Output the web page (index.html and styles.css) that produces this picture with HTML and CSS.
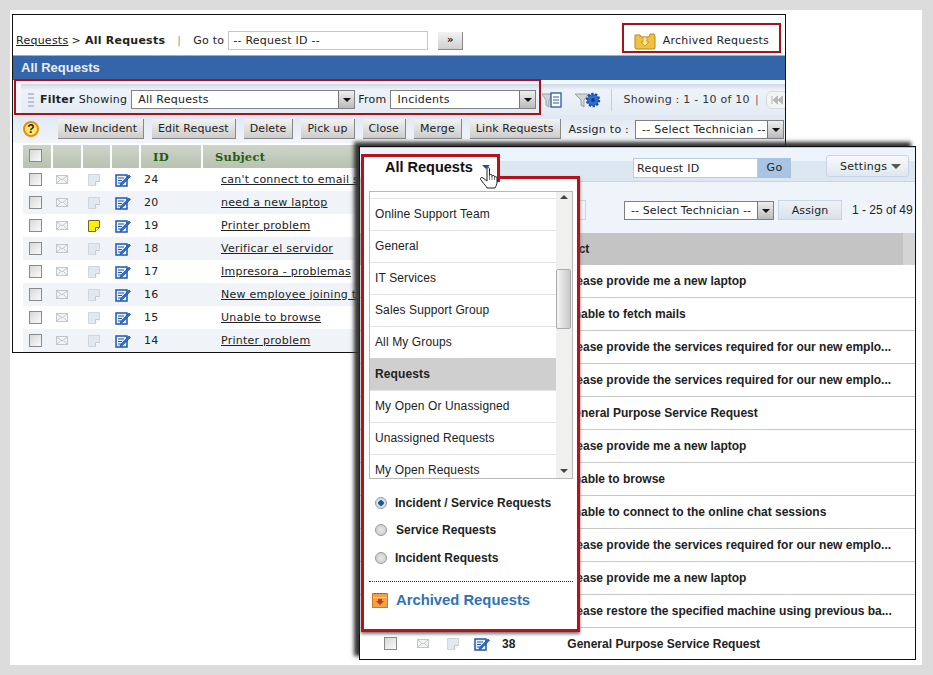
FILE: index.html
```html
<!DOCTYPE html>
<html lang="en">
<head>
<meta charset="utf-8">
<title>All Requests</title>
<link rel="stylesheet" href="styles.css">
</head>
<body>
<svg class="defs" width="0" height="0" aria-hidden="true">
  <defs>
    <symbol id="mail" viewBox="0 0 12 10"><rect x=".5" y=".5" width="11" height="8" fill="#f2f4f5" stroke="#c2c7cc"/><path d="M1 1l5 4 5-4M1 8l3.500-3.500M11 8L7.500 4.500" fill="none" stroke="#c2c7cc"/></symbol>
    <symbol id="note" viewBox="0 0 12 12"><path d="M.5.500h11v7l-4 4h-7z" fill="#e2e8f0" stroke="#cfd6de"/><path d="M7.500 11.500v-4h4" fill="#fff" stroke="#c2c9d2"/></symbol>
    <symbol id="noteY" viewBox="0 0 12 12"><path d="M.5.500h11v7l-4 4h-7z" fill="#f7ee12" stroke="#6e6a10"/><path d="M7.500 11.500v-4h4" fill="#fff" stroke="#6e6a10"/></symbol>
    <symbol id="edit" viewBox="0 0 16 14"><rect x="1" y="2" width="11" height="11" fill="#e8f1fb" stroke="#1f57b0" stroke-width="1.500"/><path d="M3 5h6M3 7.500h4M3 10h3" stroke="#1f57b0"/><path d="M6 10l8-8 1.500 1.500-8 8-2.500 1z" fill="#2a70cf" stroke="#123f8c" stroke-width=".6"/></symbol>
  </defs>
</svg>

<main class="canvas">
  <section class="win-back">
    <div class="crumbs">
      <a class="link" href="#">Requests</a><span class="sep">&gt;</span><b>All Requests</b><span class="pipe">|</span><span>Go to</span>
      <span class="field goto">-- Request ID --</span>
      <span class="go-btn">&#187;</span>
      <span class="archived"><svg width="22" height="18" viewBox="0 0 22 18"><path d="M1 3h5l1 2h8l1-3h4l1 2v12l-1 1H2l-1-1z" fill="#f3c23c" stroke="#b8862a"/><path d="M9 5h4v5h2l-4 4-4-4h2z" fill="#fbe98e" stroke="#c08a20" stroke-width=".7"/></svg>Archived Requests</span>
    </div>
    <h1 class="title">All Requests</h1>
    <div class="filter">
      <span class="grip"></span><b>Filter</b><span>Showing</span>
      <span class="field sel sel-show">All Requests<i class="arrow"></i></span>
      <span>From</span>
      <span class="field sel sel-from">Incidents<i class="arrow"></i></span>
      <svg class="fic" width="22" height="18" viewBox="0 0 22 18"><path d="M1 3h11l-4 6v7l-3-2V9z" fill="#cfd4d8" stroke="#9aa2aa"/><rect x="10" y="2" width="10" height="14" fill="#fff" stroke="#2457a8" stroke-width="1.300"/><path d="M12 6h6M12 9h6M12 12h6" stroke="#2457a8"/></svg>
      <svg class="fic" width="28" height="18" viewBox="0 0 28 18"><path d="M1 3h14l-5 6v7l-3-2V9z" fill="#cfd4d8" stroke="#9aa2aa"/><circle cx="19" cy="9" r="6" fill="#2f6fd0" stroke="#1c4c9c" stroke-width="2.500" stroke-dasharray="2.200 1.500"/><circle cx="19" cy="9" r="2" fill="#123f8c"/></svg>
      <span class="vsep"></span>
      <span class="showing">Showing : 1 - 10 of 10</span><span class="tick">|</span>
      <span class="pager"><svg width="12" height="10" viewBox="0 0 12 10"><path d="M1 1v8M6.500 1v8L2 5zM11.500 1v8L7 5z" fill="#b4b8bc" stroke="#b4b8bc"/></svg></span>
    </div>
    <div class="toolbar">
      <span class="help">?</span>
      <span class="btn">New Incident</span><span class="btn">Edit Request</span><span class="btn">Delete</span><span class="btn">Pick up</span><span class="btn">Close</span><span class="btn">Merge</span><span class="btn">Link Requests</span>
      <span class="assign">Assign to :</span>
      <span class="field sel sel-tech">-- Select Technician --<i class="arrow"></i></span>
    </div>
    <table class="grid">
      <thead>
        <tr><th class="c1"><span class="cb"></span></th><th class="c2"></th><th class="c3"></th><th class="c4"></th><th class="c5">ID</th><th>Subject</th></tr>
      </thead>
      <tbody>
        <tr><td><span class="cb"></span></td><td><svg class="im"><use href="#mail"/></svg></td><td><svg class="in"><use href="#note"/></svg></td><td><svg class="ie"><use href="#edit"/></svg></td><td class="num">24</td><td class="sub"><a href="#">can't connect to email s</a></td></tr>
        <tr class="alt"><td><span class="cb"></span></td><td><svg class="im"><use href="#mail"/></svg></td><td><svg class="in"><use href="#note"/></svg></td><td><svg class="ie"><use href="#edit"/></svg></td><td class="num">20</td><td class="sub"><a href="#">need a new laptop</a></td></tr>
        <tr><td><span class="cb"></span></td><td><svg class="im"><use href="#mail"/></svg></td><td><svg class="in"><use href="#noteY"/></svg></td><td><svg class="ie"><use href="#edit"/></svg></td><td class="num">19</td><td class="sub"><a href="#">Printer problem</a></td></tr>
        <tr class="alt"><td><span class="cb"></span></td><td><svg class="im"><use href="#mail"/></svg></td><td><svg class="in"><use href="#note"/></svg></td><td><svg class="ie"><use href="#edit"/></svg></td><td class="num">18</td><td class="sub"><a href="#">Verificar el servidor</a></td></tr>
        <tr><td><span class="cb"></span></td><td><svg class="im"><use href="#mail"/></svg></td><td><svg class="in"><use href="#note"/></svg></td><td><svg class="ie"><use href="#edit"/></svg></td><td class="num">17</td><td class="sub"><a href="#">Impresora - problemas</a></td></tr>
        <tr class="alt"><td><span class="cb"></span></td><td><svg class="im"><use href="#mail"/></svg></td><td><svg class="in"><use href="#note"/></svg></td><td><svg class="ie"><use href="#edit"/></svg></td><td class="num">16</td><td class="sub"><a href="#">New employee joining t</a></td></tr>
        <tr><td><span class="cb"></span></td><td><svg class="im"><use href="#mail"/></svg></td><td><svg class="in"><use href="#note"/></svg></td><td><svg class="ie"><use href="#edit"/></svg></td><td class="num">15</td><td class="sub"><a href="#">Unable to browse</a></td></tr>
        <tr class="alt"><td><span class="cb"></span></td><td><svg class="im"><use href="#mail"/></svg></td><td><svg class="in"><use href="#note"/></svg></td><td><svg class="ie"><use href="#edit"/></svg></td><td class="num">14</td><td class="sub"><a href="#">Printer problem</a></td></tr>
      </tbody>
    </table>
    <div class="hl hl-filter"></div>
    <div class="hl hl-arch"></div>
  </section>

  <section class="win-front">
    <div class="f-head">
      <span class="f-search"><span class="f-input">Request ID</span><span class="f-go">Go</span></span>
      <span class="f-settings">Settings<i class="arrow-s"></i></span>
    </div>
    <div class="f-tools">
      <span class="f-stub"></span>
      <span class="field sel f-tech">-- Select Technician --<i class="arrow"></i></span>
      <span class="f-assign">Assign</span>
      <span class="f-count">1 - 25 of 49</span>
    </div>
    <div class="f-colhead"><span>Subject</span></div>
    <ul class="f-rows">
      <li>Please provide me a new laptop</li>
      <li>Unable to fetch mails</li>
      <li>Please provide the services required for our new emplo...</li>
      <li>Please provide the services required for our new emplo...</li>
      <li>General Purpose Service Request</li>
      <li>Please provide me a new laptop</li>
      <li>Unable to browse</li>
      <li>Unable to connect to the online chat sessions</li>
      <li>Please provide the services required for our new emplo...</li>
      <li>Please provide me a new laptop</li>
      <li>Please restore the specified machine using previous ba...</li>
      <li class="last"><span class="cb"></span><svg class="im"><use href="#mail"/></svg><svg class="in"><use href="#note"/></svg><svg class="ie"><use href="#edit"/></svg><b class="n38">38</b>General Purpose Service Request</li>
    </ul>
  </section>

  <aside class="pop">
    <div class="pop-tab">All Requests<i class="tab-arrow"></i></div>
    <div class="pop-body">
      <div class="listbox">
        <ul class="list">
          <li>Online Support Team</li>
          <li>General</li>
          <li>IT Services</li>
          <li>Sales Support Group</li>
          <li>All My Groups</li>
          <li class="on">Requests</li>
          <li>My Open Or Unassigned</li>
          <li>Unassigned Requests</li>
          <li>My Open Requests</li>
        </ul>
        <div class="scroll"><i class="up"></i><span class="thumb"></span><i class="down"></i></div>
      </div>
      <div class="radios">
        <label class="radio"><i class="dot sel-dot"></i>Incident / Service Requests</label>
        <label class="radio"><i class="dot"></i><span class="r2">Service Requests</span></label>
        <label class="radio"><i class="dot"></i>Incident Requests</label>
      </div>
      <div class="pop-arch"><svg width="16" height="17" viewBox="0 0 16 17"><rect x=".5" y="2.500" width="15" height="14" fill="#f2a04a" stroke="#d07a22"/><path d="M2 2.500h12" stroke="#8a5a20" stroke-dasharray="2 1"/><rect x="1" y="6" width="14" height="1" fill="#fcd9a8"/><path d="M6 8h4v2h2l-4 4-4-4h2z" fill="#b5441c"/></svg><span>Archived Requests</span></div>
    </div>
  </aside>

  <svg class="hand" width="18" height="22" viewBox="0 0 18 22"><path d="M7 2c0-2 2.500-2 2.500 0v6.500c0-1.500 2.500-1.500 2.500 0v1c0-1.500 2.500-1.500 2.500 0v1c0-1.200 2.500-1.200 2.500.5v4c0 2.500-1 4-2 6H7c-1-2-2.500-3.500-4.500-6L.6 12.500c-.8-2 1.400-2.500 2.400-1.500L7 14z" fill="#fff" stroke="#222"/><path d="M9.500 9v4M12 9.500v3.500M14.500 10.500V13" stroke="#444" stroke-width=".7"/></svg>
</main>
</body>
</html>
```
FILE: styles.css
```css
* { box-sizing: border-box; }
html, body { margin: 0; padding: 0; }
body { width: 933px; height: 675px; overflow: hidden; background: #dcdcdc; font-family: "DejaVu Sans", Verdana, sans-serif; font-size: 11px; letter-spacing: .25px; color: #222; }
.defs { position: absolute; }
.canvas { position: relative; width: 912px; height: 655px; margin: 10px 0 0 10px; background: #fff; }
a { color: #222; }
ul { list-style: none; margin: 0; padding: 0; }

.win-back { position: absolute; left: 2px; top: 4px; width: 774px; height: 339px; border: 1px solid #111; background: #fff; overflow: hidden; }
.crumbs { display: flex; align-items: center; height: 40px; padding: 11px 0 0 3px; }
.link { text-decoration: underline; }
.sep { margin: 0 4px 0 3px; }
.pipe { margin: 0 12px 0 12px; color: #999; }
.field { display: inline-flex; align-items: center; background: #fff; border: 1px solid #c4c8ce; padding-left: 4px; height: 19px; flex: none; }
.goto { width: 200px; margin-left: 4px; }
.go-btn { width: 25px; height: 18px; margin-left: 10px; background: linear-gradient(#f2f2f2, #d0d0d0); border-right: 1px solid #888; border-bottom: 1px solid #888; text-align: center; line-height: 15px; font-weight: bold; font-size: 10px; }
.archived { display: flex; align-items: center; gap: 7px; margin-left: auto; margin-right: 16px; }
.title { margin: 0; height: 25px; background: #3465a8; border-top: 1px solid #8fb0dc; color: #e8eef8; font: bold 13px/24px "Liberation Sans", Arial, sans-serif; padding-left: 8px; letter-spacing: 0; }

.filter { display: flex; align-items: center; height: 35px; padding: 4px 0 0 15px; background: #f3f6fa linear-gradient(#ccd8e6 0, #eef3f9 6px, #e2eaf3) no-repeat 8px 4px; white-space: nowrap; }
.filter > * { flex: none; }
.grip { width: 6px; height: 14px; margin-right: 6px; background: repeating-linear-gradient(#b6c4d4 0 2px, transparent 2px 4px); }
.filter b { margin-right: 4px; }
.sel { position: relative; border-color: #808080; padding-left: 6px; }
.sel-show { width: 224px; margin: 0 3px 0 4px; }
.sel-from { width: 146px; margin-left: 4px; }
.arrow { position: absolute; right: 0; top: 0; bottom: 0; width: 16px; background: linear-gradient(#eee, #bbb); border-left: 1px solid #777; }
.arrow::after { content: ""; position: absolute; left: 4px; top: 7px; border: 4px solid transparent; border-top-color: #111; border-bottom: 0; }
.fic { margin-left: 5px; }
.fic + .fic { margin-left: 11px; }
.vsep { width: 1px; height: 22px; margin: 0 11px 0 9px; background: #c5ced8; }
.showing { color: #333; }
.tick { margin-left: 5px; color: #666; }
.pager { display: flex; align-items: center; margin-left: 7px; width: 30px; height: 18px; border: 1px solid #d4d9df; border-radius: 6px; background: #f4f4f4; padding-left: 4px; }

.toolbar { display: flex; align-items: center; height: 28px; padding-left: 10px; background: linear-gradient(#e0e8f1, #f2f5f9); white-space: nowrap; }
.toolbar > * { flex: none; }
.help { width: 16px; height: 16px; border: 2px solid #e88a10; border-radius: 50%; background: #ffe96a; text-align: center; font: bold 12px/12px "Liberation Sans", Arial, sans-serif; margin-right: 19px; }
.btn { height: 20px; padding: 0 6px; margin-right: 8px; background: linear-gradient(#f2f2f2, #cdcdcd); border-right: 1px solid #888; border-bottom: 1px solid #888; line-height: 19px; letter-spacing: .1px; }
.sel-tech { width: 149px; margin-left: 6px; }

.grid { border-collapse: separate; border-spacing: 0; width: 760px; margin-left: 10px; margin-top: 2px; table-layout: fixed; }
.grid th { height: 23px; padding: 0 0 0 12px; background: linear-gradient(#cdd5c8, #b7c2b0); border-right: 2px solid #fff; color: #2a5a12; font: bold 11.500px "DejaVu Serif", serif; text-align: left; }
.grid .c1, .grid .c2 { width: 30px; }
.grid .c3, .grid .c4 { width: 29px; }
.grid .c5 { width: 62px; padding-left: 12px; }
.grid td { height: 23px; padding: 0 0 0 3px; vertical-align: middle; line-height: 0; }
.grid tr.alt td { background: #f0f4f9; }
.grid td:first-child, .grid th:first-child { padding-left: 6px; }
.grid td:nth-child(3) { padding-left: 5px; }
.grid td.num { line-height: 16px; }
.grid td.sub { padding-left: 18px; line-height: 14px; }
.cb { display: inline-block; width: 13px; height: 13px; border: 1px solid #8a8a8a; background: linear-gradient(135deg, #d8d8d8, #fafafa); }
.im { width: 12px; height: 10px; }
.in { width: 12px; height: 12px; }
.ie { width: 16px; height: 14px; }

.hl { position: absolute; border: 2px solid #a8121c; pointer-events: none; }
.hl-filter { left: 1px; top: 64px; width: 527px; height: 36px; }
.hl-arch { left: 609px; top: 8px; width: 159px; height: 30px; }

.win-front { position: absolute; left: 349px; top: 136px; width: 557px; height: 514px; border: 1px solid #111; background: #fff; box-shadow: -5px -4px 4px #333; overflow: hidden; font-family: "Liberation Sans", Arial, sans-serif; letter-spacing: 0; }
.f-head { display: flex; justify-content: flex-end; align-items: center; height: 35px; padding: 1px 6px 0 0; border-top: 1px solid #b8cbe0; background: linear-gradient(#eef4fb 0 40%, #dde7f1 40%); border-bottom: 1px solid #c7d5e4; font: 11px "DejaVu Sans", sans-serif; letter-spacing: .25px; }
.f-search { display: flex; height: 20px; margin: 5px 35px 0 0; }
.f-input { width: 125px; background: #fff; border: 1px solid #b8cbe0; padding-left: 3px; line-height: 20px; }
.f-go { width: 33px; background: #a8c4e2; text-align: center; line-height: 20px; }
.f-settings { display: flex; align-items: center; width: 83px; height: 22px; margin-top: 2px; padding-left: 13px; border: 1px solid #c7d5e4; border-radius: 3px; background: linear-gradient(#f8fafc, #dfe7ef); }
.arrow-s { margin-left: 4px; border: 5px solid transparent; border-top-color: #555; border-bottom: 0; }
.f-tools { display: flex; align-items: center; height: 51px; background: #eef4f9; font: 11px "DejaVu Sans", sans-serif; padding: 5px 0 0 216px; white-space: nowrap; letter-spacing: .1px; }
.f-stub { width: 10px; height: 20px; border: 1px solid #c7d5e4; border-left: 0; margin-right: 38px; }
.f-tech { width: 150px; }
.f-assign { width: 64px; height: 20px; margin-left: 4px; text-align: center; line-height: 20px; border: 1px solid #c7d5e4; background: linear-gradient(#eef2f6, #d8e2ec); }
.f-count { margin-left: 10px; font-family: "Liberation Sans", Arial, sans-serif; font-size: 12px; letter-spacing: 0; }
.f-colhead { height: 32px; background: #c4c4c4; font: bold 12px/32px "Liberation Sans", Arial, sans-serif; padding-left: 186px; border-right: 12px solid #d4d4d4; }
.f-rows li { height: 33px; line-height: 32px; padding-left: 205px; font-weight: bold; font-size: 12px; border-bottom: 1px solid #c8c8c8; white-space: nowrap; }
.f-rows li.last { display: flex; align-items: center; padding-left: 24px; border: 0; height: 31px; }
.last .im { margin-left: 20px; }
.last .in { margin-left: 18px; }
.last .ie { margin-left: 15px; }
.n38 { margin: 0 52px 0 12px; }

.pop { position: absolute; left: 351px; top: 144px; font-family: "Liberation Sans", Arial, sans-serif; letter-spacing: 0; }
.pop-tab { position: relative; z-index: 1; width: 139px; height: 28px; padding: 2px 0 0 21px; background: #fff; border: 3px solid #b5121b; border-bottom: 0; font: bold 14.500px "Liberation Sans", Arial, sans-serif; color: #111; }
.tab-arrow { position: absolute; left: 118px; top: 8px; border: 4.500px solid transparent; border-top-color: #2b4a8c; border-bottom: 0; }
.pop-body { width: 219px; height: 456px; margin-top: -6px; padding: 12px 4px 0 5px; background: #fff; border: 3px solid #b5121b; box-shadow: 0 2px 3px #777; }
.listbox { display: flex; width: 204px; height: 288px; border: 1px solid #b8b8b8; }
.list { width: 186px; padding-top: 6px; overflow: hidden; }
.list li { height: 32px; line-height: 31px; padding-left: 5px; font-size: 12px; letter-spacing: .12px; color: #222; border-top: 1px solid #e4e4e4; }
.list li.on { background: #cfcfcf; font-weight: bold; border-color: #cfcfcf; }
.scroll { position: relative; flex: 1; background: #f0f0ee; }
.up, .down { position: absolute; left: 4px; border: 4px solid transparent; }
.up { top: 3px; border-bottom-color: #444; border-top: 0; }
.down { bottom: 5px; border-top-color: #444; border-bottom: 0; }
.thumb { position: absolute; left: 0; top: 77px; width: 15px; height: 60px; border: 1px solid #aaa; border-radius: 2px; background: linear-gradient(90deg, #f4f4f4, #c9c9c9); }
.radios { padding: 10px 0 0 6px; height: 103px; border-bottom: 1px dotted #333; }
.radio { display: flex; align-items: center; gap: 8px; height: 27.500px; font-weight: bold; font-size: 12px; color: #222; }
.dot { width: 12px; height: 12px; border-radius: 50%; border: 1px solid #9a9a9a; background: radial-gradient(#e8e8e8, #c8c8c8); }
.sel-dot { background: radial-gradient(#1c5a96 0 2.500px, #d6dee8 3px); }
.r2 { margin-left: 1px; }
.pop-arch { display: flex; align-items: center; gap: 8px; padding: 9px 0 0 3px; color: #2f73b4; font: bold 14.800px "Liberation Sans", Arial, sans-serif; }
.hand { position: absolute; left: 470px; top: 157px; z-index: 3; }
```
